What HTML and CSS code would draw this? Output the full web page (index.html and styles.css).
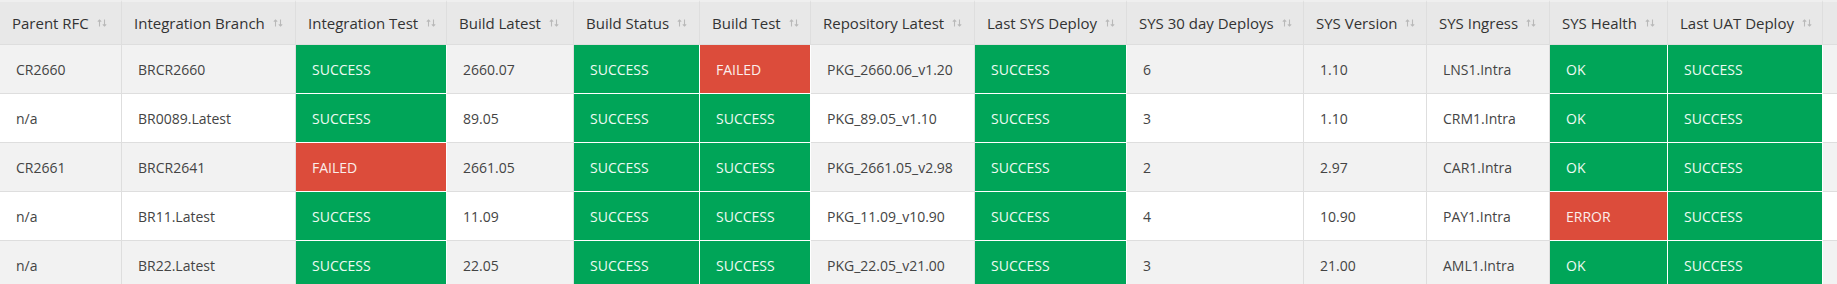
FILE: index.html
```html
<!DOCTYPE html>
<html>
<head>
<meta charset="utf-8">
<link rel="stylesheet" href="styles.css">
</head>
<body>
<table class="grid">
  <colgroup>
    <col style="width:122px"><col style="width:174px"><col style="width:151px"><col style="width:127px">
    <col style="width:126px"><col style="width:111px"><col style="width:164px"><col style="width:152px">
    <col style="width:177px"><col style="width:123px"><col style="width:123px"><col style="width:118px">
    <col style="width:155px"><col style="width:150px">
  </colgroup>
  <thead>
    <tr>
      <th><span class="h">Parent RFC<svg class="sort" viewBox="0 0 10 8"><path d="M2.5 7.5V1M0.8 2.7L2.5 1L4.2 2.7M7.5 0.5V7M5.8 5.3L7.5 7L9.2 5.3"/></svg></span></th>
      <th><span class="h">Integration Branch<svg class="sort" viewBox="0 0 10 8"><path d="M2.5 7.5V1M0.8 2.7L2.5 1L4.2 2.7M7.5 0.5V7M5.8 5.3L7.5 7L9.2 5.3"/></svg></span></th>
      <th><span class="h">Integration Test<svg class="sort" viewBox="0 0 10 8"><path d="M2.5 7.5V1M0.8 2.7L2.5 1L4.2 2.7M7.5 0.5V7M5.8 5.3L7.5 7L9.2 5.3"/></svg></span></th>
      <th><span class="h">Build Latest<svg class="sort" viewBox="0 0 10 8"><path d="M2.5 7.5V1M0.8 2.7L2.5 1L4.2 2.7M7.5 0.5V7M5.8 5.3L7.5 7L9.2 5.3"/></svg></span></th>
      <th><span class="h">Build Status<svg class="sort" viewBox="0 0 10 8"><path d="M2.5 7.5V1M0.8 2.7L2.5 1L4.2 2.7M7.5 0.5V7M5.8 5.3L7.5 7L9.2 5.3"/></svg></span></th>
      <th><span class="h">Build Test<svg class="sort" viewBox="0 0 10 8"><path d="M2.5 7.5V1M0.8 2.7L2.5 1L4.2 2.7M7.5 0.5V7M5.8 5.3L7.5 7L9.2 5.3"/></svg></span></th>
      <th><span class="h">Repository Latest<svg class="sort" viewBox="0 0 10 8"><path d="M2.5 7.5V1M0.8 2.7L2.5 1L4.2 2.7M7.5 0.5V7M5.8 5.3L7.5 7L9.2 5.3"/></svg></span></th>
      <th><span class="h">Last SYS Deploy<svg class="sort" viewBox="0 0 10 8"><path d="M2.5 7.5V1M0.8 2.7L2.5 1L4.2 2.7M7.5 0.5V7M5.8 5.3L7.5 7L9.2 5.3"/></svg></span></th>
      <th><span class="h">SYS 30 day Deploys<svg class="sort" viewBox="0 0 10 8"><path d="M2.5 7.5V1M0.8 2.7L2.5 1L4.2 2.7M7.5 0.5V7M5.8 5.3L7.5 7L9.2 5.3"/></svg></span></th>
      <th><span class="h">SYS Version<svg class="sort" viewBox="0 0 10 8"><path d="M2.5 7.5V1M0.8 2.7L2.5 1L4.2 2.7M7.5 0.5V7M5.8 5.3L7.5 7L9.2 5.3"/></svg></span></th>
      <th><span class="h">SYS Ingress<svg class="sort" viewBox="0 0 10 8"><path d="M2.5 7.5V1M0.8 2.7L2.5 1L4.2 2.7M7.5 0.5V7M5.8 5.3L7.5 7L9.2 5.3"/></svg></span></th>
      <th><span class="h">SYS Health<svg class="sort" viewBox="0 0 10 8"><path d="M2.5 7.5V1M0.8 2.7L2.5 1L4.2 2.7M7.5 0.5V7M5.8 5.3L7.5 7L9.2 5.3"/></svg></span></th>
      <th><span class="h">Last UAT Deploy<svg class="sort" viewBox="0 0 10 8"><path d="M2.5 7.5V1M0.8 2.7L2.5 1L4.2 2.7M7.5 0.5V7M5.8 5.3L7.5 7L9.2 5.3"/></svg></span></th>
      <th></th>
    </tr>
  </thead>
  <tbody>
    <tr>
      <td>CR2660</td><td>BRCR2660</td><td class="ok">SUCCESS</td><td>2660.07</td>
      <td class="ok">SUCCESS</td><td class="bad">FAILED</td><td>PKG_2660.06_v1.20</td><td class="ok">SUCCESS</td>
      <td>6</td><td>1.10</td><td>LNS1.Intra</td><td class="ok">OK</td><td class="ok">SUCCESS</td><td></td>
    </tr>
    <tr>
      <td>n/a</td><td>BR0089.Latest</td><td class="ok">SUCCESS</td><td>89.05</td>
      <td class="ok">SUCCESS</td><td class="ok">SUCCESS</td><td>PKG_89.05_v1.10</td><td class="ok">SUCCESS</td>
      <td>3</td><td>1.10</td><td>CRM1.Intra</td><td class="ok">OK</td><td class="ok">SUCCESS</td><td></td>
    </tr>
    <tr>
      <td>CR2661</td><td>BRCR2641</td><td class="bad">FAILED</td><td>2661.05</td>
      <td class="ok">SUCCESS</td><td class="ok">SUCCESS</td><td>PKG_2661.05_v2.98</td><td class="ok">SUCCESS</td>
      <td>2</td><td>2.97</td><td>CAR1.Intra</td><td class="ok">OK</td><td class="ok">SUCCESS</td><td></td>
    </tr>
    <tr>
      <td>n/a</td><td>BR11.Latest</td><td class="ok">SUCCESS</td><td>11.09</td>
      <td class="ok">SUCCESS</td><td class="ok">SUCCESS</td><td>PKG_11.09_v10.90</td><td class="ok">SUCCESS</td>
      <td>4</td><td>10.90</td><td>PAY1.Intra</td><td class="bad">ERROR</td><td class="ok">SUCCESS</td><td></td>
    </tr>
    <tr>
      <td>n/a</td><td>BR22.Latest</td><td class="ok">SUCCESS</td><td>22.05</td>
      <td class="ok">SUCCESS</td><td class="ok">SUCCESS</td><td>PKG_22.05_v21.00</td><td class="ok">SUCCESS</td>
      <td>3</td><td>21.00</td><td>AML1.Intra</td><td class="ok">OK</td><td class="ok">SUCCESS</td><td></td>
    </tr>
  </tbody>
</table>
</body>
</html>
```

FILE: styles.css
```css
html, body {
  margin: 0;
  padding: 0;
  background: #ffffff;
}

.grid {
  table-layout: fixed;
  border-collapse: separate;
  border-spacing: 0;
  width: 1973px;
  font-family: "Open Sans", "Liberation Sans", sans-serif;
}

.grid th,
.grid td {
  box-sizing: border-box;
  border-right: 1px solid #dedede;
  border-bottom: 1px solid #dedede;
  text-align: left;
  white-space: nowrap;
  overflow: hidden;
}

.grid th {
  height: 45px;
  padding: 0 0 0 12px;
  background: #e8e8e8;
  border-top: 2px solid #efefef;
  color: #333333;
  font-size: 15px;
  font-weight: 400;
  vertical-align: middle;
}

.h {
  display: inline-flex;
  align-items: center;
  gap: 8px;
}

.sort {
  width: 10px;
  height: 8px;
  fill: none;
  stroke: #b9b9b9;
  stroke-width: 1.1;
}

.grid td {
  height: 49px;
  padding: 0 0 0 16px;
  color: #444444;
  font-size: 14px;
  vertical-align: middle;
}

.grid tbody tr:nth-child(odd) td {
  background: #f2f2f2;
}

.grid tbody tr:nth-child(even) td {
  background: #ffffff;
}

.grid tbody tr td.ok {
  background: #00a558;
  color: #eefaf2;
  border-right-color: #ffffff;
  border-bottom-color: #ffffff;
}

.grid tbody tr td.bad {
  background: #dc4c3b;
  color: #fbeeec;
  border-right-color: #ffffff;
  border-bottom-color: #ffffff;
}
```
